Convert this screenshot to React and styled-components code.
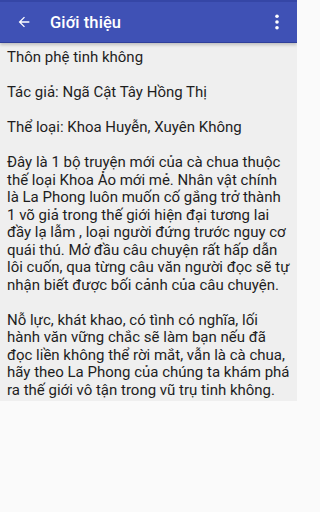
import React from 'react'
import styled, {createGlobalStyle} from 'styled-components'

// ====================== STYLED COMPONENTS ======================
const GlobalStyle = createGlobalStyle`
  html, body {
    margin: 0;
    padding: 0;
    background: #fafafa;
  }
  body {
    font-family: Roboto, 'Noto Sans', sans-serif;
  }
`

const Screen = styled.div`
  width: 297px;
  height: 512px;
  display: flex;
  flex-direction: column;
  background: #fafafa;
  overflow: hidden;
`

const AppBar = styled.header`
  height: 40px;
  display: flex;
  align-items: center;
  background: #3f51b5;
  border-top: 2px solid #3546a6;
  border-bottom: 1px solid #2f3f9a;
  box-shadow: 0 2px 3px rgba(0, 0, 0, 0.2);
  color: #ffffff;
  position: relative;
  z-index: 1;
`

const IconButton = styled.button`
  width: ${(p) => p.size}px;
  height: 40px;
  display: flex;
  align-items: center;
  justify-content: center;
  padding: 0;
  border: none;
  background: transparent;
  color: inherit;
`

const Title = styled.h1`
  flex: 1;
  margin: 0 0 0 2px;
  font-size: 16.5px;
  font-weight: 500;
  letter-spacing: 0.1px;
`

const Content = styled.main`
  background: #efefef;
  padding: 6px 7px 2px 7px;
  color: #1e1e1e;
  font-size: 15px;
  line-height: 17.5px;
`

const Para = styled.p`
  margin: 0 0 17.5px 0;

  &:last-child {
    margin-bottom: 0;
  }
`
// ===============================================================

const BackArrow = () => (
  <svg width="16" height="16" viewBox="0 0 24 24">
    <path
      d="M20 11H7.83l5.59-5.59L12 4l-8 8 8 8 1.41-1.41L7.83 13H20v-2z"
      fill="currentColor"
    />
  </svg>
)

const MoreDots = () => (
  <svg width="6" height="16" viewBox="0 0 6 16">
    <circle cx="3" cy="2.2" r="1.8" fill="currentColor" />
    <circle cx="3" cy="8" r="1.8" fill="currentColor" />
    <circle cx="3" cy="13.8" r="1.8" fill="currentColor" />
  </svg>
)

export default function App() {
  return (
    <>
      <GlobalStyle />
      <Screen>
        <AppBar>
          <IconButton size={48}>
            <BackArrow />
          </IconButton>
          <Title>Giới thiệu</Title>
          <IconButton size={40}>
            <MoreDots />
          </IconButton>
        </AppBar>
        <Content>
          <Para>Thôn phệ tinh không</Para>
          <Para>Tác giả: Ngã Cật Tây Hồng Thị</Para>
          <Para>Thể loại: Khoa Huyễn, Xuyên Không</Para>
          <Para>
            Đây là 1 bộ truyện mới của cà chua thuộc thế loại Khoa Ảo mới mẻ.
            Nhân vật chính là La Phong luôn muốn cố gắng trở thành 1 võ giả
            trong thế giới hiện đại tương lai đầy lạ lẫm , loại người đứng trước
            nguy cơ quái thú. Mở đầu câu chuyện rất hấp dẫn lôi cuốn, qua từng
            câu văn người đọc sẽ tự nhận biết được bối cảnh của câu chuyện.
          </Para>
          <Para>
            Nỗ lực, khát khao, có tình có nghĩa, lối hành văn vững chắc sẽ làm
            bạn nếu đã đọc liền không thể rời mắt, vẫn là cà chua, hãy theo La
            Phong của chúng ta khám phá ra thế giới vô tận trong vũ trụ tinh
            không.
          </Para>
        </Content>
      </Screen>
    </>
  )
}
